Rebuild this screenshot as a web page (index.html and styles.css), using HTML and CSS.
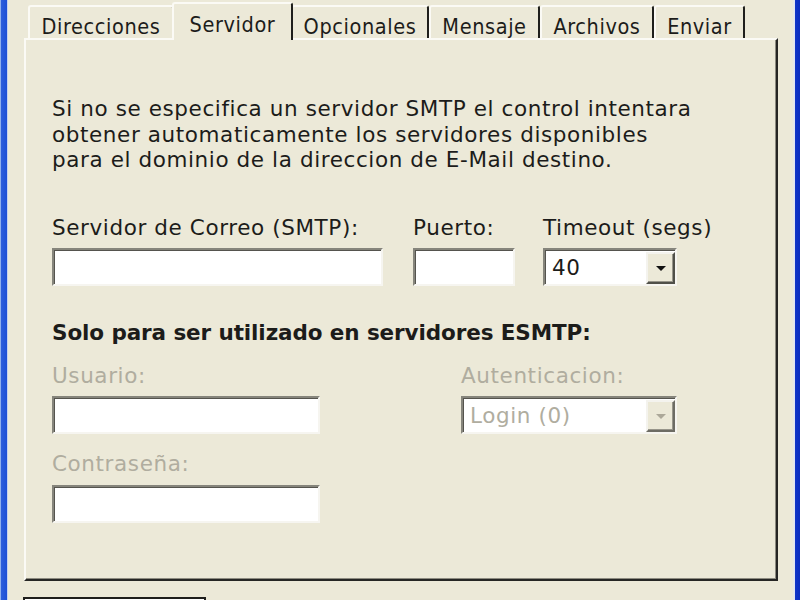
FILE: index.html
```html
<!DOCTYPE html>
<html lang="es">
<head>
<meta charset="utf-8">
<title>Servidor</title>
<link rel="stylesheet" href="styles.css">
</head>
<body>
<div class="screen">
  <div class="frame-left"></div>
  <div class="main">
    <div class="tabs">
      <div class="tab t-dir">Direcciones</div>
      <div class="tab active t-srv">Servidor</div>
      <div class="tab t-opc">Opcionales</div>
      <div class="tab t-men">Mensaje</div>
      <div class="tab t-arc">Archivos</div>
      <div class="tab t-env">Enviar</div>
    </div>
    <div class="panel">
      <p class="intro">Si no se especifica un servidor SMTP el control intentara<br>obtener automaticamente los servidores disponibles<br>para el dominio de la direccion de E-Mail destino.</p>
      <div class="row-server">
        <div class="field f-smtp"><div class="label">Servidor de Correo (SMTP):</div><div class="input"></div></div>
        <div class="field f-port"><div class="label">Puerto:</div><div class="input"></div></div>
        <div class="field f-timeout"><div class="label">Timeout (segs)</div><div class="combo"><span class="value">40</span><span class="drop"><i class="arrow"></i></span></div></div>
      </div>
      <div class="section">Solo para ser utilizado en servidores ESMTP:</div>
      <div class="row-auth">
        <div class="col-left">
          <div class="field disabled f-user"><div class="label">Usuario:</div><div class="input"></div></div>
          <div class="field disabled f-pass"><div class="label">Contraseña:</div><div class="input"></div></div>
        </div>
        <div class="field disabled f-auth"><div class="label">Autenticacion:</div><div class="combo"><span class="value">Login (0)</span><span class="drop"><i class="arrow"></i></span></div></div>
      </div>
    </div>
    <div class="bottom-btn"></div>
  </div>
  <div class="frame-right"></div>
</div>
</body>
</html>
```

FILE: styles.css
```css
html, body {
  margin: 0;
  padding: 0;
  width: 800px;
  height: 600px;
  overflow: hidden;
  background: #ece9d8;
}

.screen {
  display: flex;
  width: 800px;
  height: 600px;
  overflow: hidden;
  font-family: "DejaVu Sans", sans-serif;
  font-size: 21.5px;
  letter-spacing: 0.6px;
  color: #1c1c1a;
}

.frame-left {
  width: 8px;
  flex: none;
  background: linear-gradient(to right, #8fb0ee 0, #8fb0ee 1px, #2d5fdc 1px, #1e50d6 7px, #c6d3ef 7px, #c6d3ef 8px);
}

.frame-right {
  width: 8px;
  flex: none;
  background: linear-gradient(to right, #ece9d8 0, #e4e6ee 2px, #dbe3f5 3px, #0f35c8 3px, #0a2cc0 8px);
}

.main {
  flex: 1;
  display: flex;
  flex-direction: column;
  overflow: hidden;
  padding: 2px 14px 0 16px;
}

.main > * {
  flex-shrink: 0;
}

.tabs {
  display: flex;
  align-items: flex-end;
  height: 36px;
  padding-left: 4px;
}

.tab {
  box-sizing: border-box;
  height: 33px;
  padding-top: 7px;
  line-height: 25px;
  text-align: center;
  white-space: nowrap;
  font-family: "DejaVu Sans Condensed", "DejaVu Sans", sans-serif;
  font-stretch: condensed;
  letter-spacing: 0.6px;
  background: #ece9d8;
  border-top: 2px solid #fbfaf5;
  border-left: 2px solid #fbfaf5;
  border-right: 2px solid #1f1f1c;
  border-top-left-radius: 3px;
  border-top-right-radius: 3px;
}

.tab.active {
  position: relative;
  z-index: 2;
  height: 38px;
  margin: 0 -2px -2px -2px;
  padding-top: 8px;
}

.t-dir { width: 146px; }
.t-srv { width: 121px; }
.t-opc { width: 138px; }
.t-men { width: 111px; }
.t-arc { width: 114px; }
.t-env { width: 91px; }

.panel {
  box-sizing: border-box;
  height: 543px;
  border: 2px solid;
  border-color: #fbfaf5 #262624 #262624 #fbfaf5;
  box-shadow: inset -1px -1px 0 #8d8b80;
  padding: 0 0 0 26px;
  line-height: 25.5px;
}

.intro {
  margin: 56px 0 0 0;
  white-space: nowrap;
}

.row-server {
  display: flex;
  margin-top: 42px;
}

.label {
  margin-bottom: 8px;
  white-space: nowrap;
}

.f-smtp { width: 331px; margin-right: 30px; }
.f-port { width: 102px; margin-right: 28px; }
.f-timeout { width: 134px; }

.input, .combo {
  box-sizing: border-box;
  height: 38px;
  background: #fff;
  border: 2px solid;
  border-color: #86857c #f6f5f0 #f6f5f0 #86857c;
  box-shadow: inset 1px 1px 0 #55544e;
}

.combo {
  display: flex;
  align-items: center;
  justify-content: space-between;
  padding: 0 0 0 7px;
}

.combo .value {
  line-height: 25px;
}

.drop {
  box-sizing: border-box;
  width: 29px;
  height: 32px;
  margin-top: 2px;
  display: flex;
  align-items: center;
  justify-content: center;
  background: #ece9d8;
  border: 2px solid;
  border-color: #f4f3ee #505049 #505049 #f4f3ee;
  box-shadow: inset -1px -1px 0 #97958a;
}

.arrow {
  display: block;
  width: 0;
  height: 0;
  border-left: 5px solid transparent;
  border-right: 5px solid transparent;
  border-top: 5px solid #111;
}

.section {
  margin-top: 34px;
  font-weight: bold;
  letter-spacing: -0.1px;
  white-space: nowrap;
}

.row-auth {
  display: flex;
  margin-top: 17px;
}

.col-left {
  width: 268px;
  margin-right: 141px;
}

.f-pass {
  margin-top: 17px;
}

.f-auth {
  width: 216px;
}

.disabled .label,
.disabled .value {
  color: #b0ad9f;
}

.disabled .arrow {
  border-top-color: #aca899;
}

.disabled .drop {
  border-color: #f4f3ee #6d6c64 #6d6c64 #f4f3ee;
}

.bottom-btn {
  box-sizing: border-box;
  width: 183px;
  height: 12px;
  margin: 16px 0 0 -1px;
  border: 2px solid #1f1f1c;
  border-bottom: none;
  box-shadow: inset 1px 1px 0 #ffffff;
}
```
